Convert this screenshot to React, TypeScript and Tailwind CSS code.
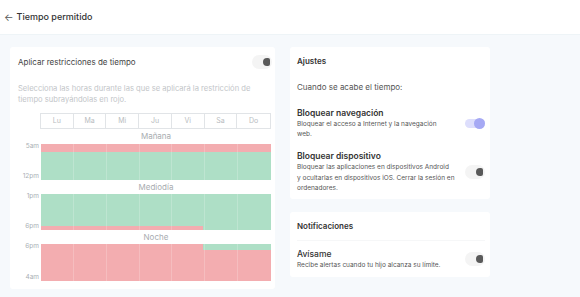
import React from "react";

const days = ["Lu", "Ma", "Mi", "Ju", "Vi", "Sa", "Do"];

function ToggleOff() {
  return (
    <div className="flex items-center h-[14px] w-[20px] rounded-full bg-[#f4f4f4] justify-end pr-[2px]">
      <div className="h-[8px] w-[7px] rounded-r-[2px] rounded-l-[4px] bg-[#5a5a5a]" />
    </div>
  );
}

function ToggleOn() {
  return (
    <div className="flex items-center h-[9px] w-[20px] rounded-full bg-[#dddefc] justify-end">
      <div className="h-[11px] w-[11px] rounded-full bg-[#a6a9f4]" />
    </div>
  );
}

function Cols() {
  return (
    <div className="absolute inset-0 grid grid-cols-7 pointer-events-none">
      {days.map((d, i) => (
        <div key={d} className={i < 6 ? "border-r border-white/20" : ""} />
      ))}
    </div>
  );
}

const R = "bg-[#f3adb0]";
const G = "bg-[#aedfc6]";

export default function App() {
  return (
    <div className="w-[580px] h-[297px] bg-[#f6f9fc] text-[#333] overflow-hidden" style={{ fontFamily: "Inter, sans-serif" }}>
      <div className="h-[35px] bg-white flex items-center pl-[4px] gap-[3px] border-b border-[#eef4f7]">
        <span className="text-[10px] text-[#555]">←</span>
        <span className="text-[9px] font-medium text-[#333]">Tiempo permitido</span>
      </div>
      <div className="flex gap-[15px] pl-[10px] pt-[12px]">
        <div className="w-[265px] h-[242px] bg-white rounded-[3px] pl-[8px] pr-[3px] pt-[8px]">
          <div className="flex items-center justify-between h-[14px]">
            <span className="text-[8px] text-[#444]">Aplicar restricciones de tiempo</span>
            <ToggleOff />
          </div>
          <div className="mt-[14px] text-[7.6px] leading-[11px] text-[#c3c6c9] pr-[6px]">
            Selecciona las horas durante las que se aplicará la restricción de tiempo subrayándolas en rojo.
          </div>
          <div className="mt-[8px] ml-[22px] w-[231px] grid grid-cols-7 border border-[#e1e4e7] h-[16px]">
            {days.map((d, i) => (
              <div key={d} className={"flex items-center justify-center text-[7px] text-[#b8bcc0] " + (i < 6 ? "border-r border-[#e1e4e7]" : "")}>{d}</div>
            ))}
          </div>
          <div className="text-center text-[8px] text-[#a8acb0] leading-[15px] ml-[23px] w-[230px]">Mañana</div>
          <div className="flex">
            <div className="w-[23px] h-[36px] flex flex-col justify-between text-[6.5px] text-[#aab0b5] text-right pr-[2px] leading-[8px]">
              <span className="-mt-[2px]">5am</span><span>12pm</span>
            </div>
            <div className="relative w-[230px] h-[36px] flex flex-col">
              <div className={"h-[8px] " + R} />
              <div className={"flex-1 " + G} />
              <Cols />
            </div>
          </div>
          <div className="text-center text-[8px] text-[#a8acb0] leading-[14px] ml-[23px] w-[230px]">Mediodía</div>
          <div className="flex">
            <div className="w-[23px] h-[36px] flex flex-col justify-between text-[6.5px] text-[#aab0b5] text-right pr-[2px] leading-[8px]">
              <span className="-mt-[2px]">1pm</span><span>6pm</span>
            </div>
            <div className="relative w-[230px] h-[36px] flex flex-col">
              <div className={"flex-1 " + G} />
              <div className="h-[4px] flex">
                <div className={"w-[162px] " + R} />
                <div className={"flex-1 " + G} />
              </div>
              <Cols />
            </div>
          </div>
          <div className="text-center text-[8px] text-[#a8acb0] leading-[14px] ml-[23px] w-[230px]">Noche</div>
          <div className="flex">
            <div className="w-[23px] h-[37px] flex flex-col justify-between text-[6.5px] text-[#aab0b5] text-right pr-[2px] leading-[8px]">
              <span className="-mt-[2px]">6pm</span><span>4am</span>
            </div>
            <div className="relative w-[230px] h-[37px] flex flex-col">
              <div className="h-[6px] flex">
                <div className={"w-[162px] " + R} />
                <div className={"flex-1 " + G} />
              </div>
              <div className={"flex-1 " + R} />
              <Cols />
            </div>
          </div>
        </div>
        <div className="w-[200px] flex flex-col gap-[13px]">
          <div className="bg-white rounded-[3px] h-[152px] pl-[7px] pr-[5px] pt-[8px]">
            <div className="text-[8px] font-semibold text-[#333] leading-[12px]">Ajustes</div>
            <div className="mt-[14px] text-[8px] text-[#555] leading-[12px]">Cuando se acabe el tiempo:</div>
            <div className="mt-[14px] flex items-center justify-between">
              <div className="w-[150px]">
                <div className="text-[8.5px] font-semibold text-[#333] leading-[12px]">Bloquear navegación</div>
                <div className="text-[6.5px] text-[#555] leading-[10px]">Bloquear el acceso a Internet y la navegación web.</div>
              </div>
              <ToggleOn />
            </div>
            <div className="mt-[11px] flex items-center justify-between">
              <div className="w-[165px]">
                <div className="text-[8.5px] font-semibold text-[#333] leading-[12px]">Bloquear dispositivo</div>
                <div className="text-[6.5px] text-[#555] leading-[10.5px]">Bloquear las aplicaciones en dispositivos Android<br />y ocultarlas en dispositivos iOS. Cerrar la sesión en ordenadores.</div>
              </div>
              <ToggleOff />
            </div>
          </div>
          <div className="bg-white rounded-[3px] h-[65px] pl-[7px] pr-[5px]">
            <div className="h-[29px] flex items-center text-[8px] font-semibold text-[#333] border-b border-[#f6f7f8]">Notificaciones</div>
            <div className="mt-[7px] flex items-center justify-between">
              <div>
                <div className="text-[8.5px] font-medium text-[#333] leading-[12px]">Avísame</div>
                <div className="text-[6.5px] text-[#555] leading-[10px]">Recibe alertas cuando tu hijo alcanza su límite.</div>
              </div>
              <ToggleOff />
            </div>
          </div>
        </div>
      </div>
    </div>
  );
}
